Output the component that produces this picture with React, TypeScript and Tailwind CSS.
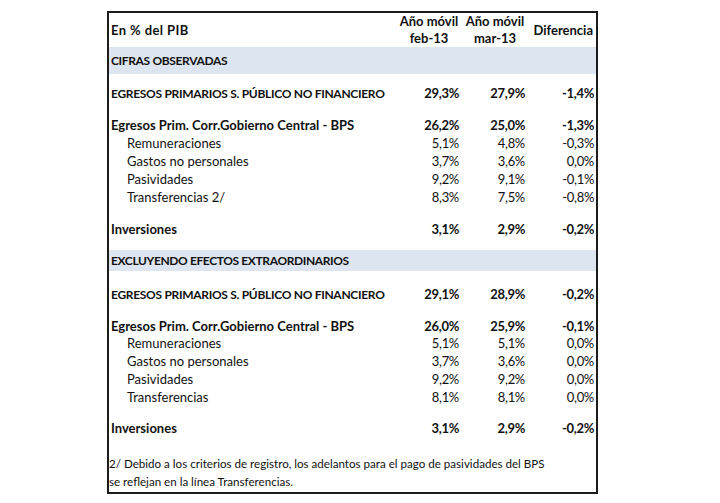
import React from 'react';

type Row = {
  label: string;
  values?: [string, string, string];
  bold?: boolean;
  caps?: boolean;
  indent?: boolean;
  h: string;
  top: string;
};

const rows: Row[] = [
  { label: 'EGRESOS PRIMARIOS S. PÚBLICO NO FINANCIERO', values: ['29,3%', '27,9%', '-1,4%'], bold: true, caps: true, h: 'h-[18px]', top: 'mt-[10px]' },
  { label: 'Egresos Prim. Corr.Gobierno Central - BPS', values: ['26,2%', '25,0%', '-1,3%'], bold: true, h: 'h-[18px]', top: 'mt-[14px]' },
  { label: 'Remuneraciones', values: ['5,1%', '4,8%', '-0,3%'], indent: true, h: 'h-[18px]', top: '' },
  { label: 'Gastos no personales', values: ['3,7%', '3,6%', '0,0%'], indent: true, h: 'h-[18px]', top: '' },
  { label: 'Pasividades', values: ['9,2%', '9,1%', '-0,1%'], indent: true, h: 'h-[18px]', top: '' },
  { label: 'Transferencias 2/', values: ['8,3%', '7,5%', '-0,8%'], indent: true, h: 'h-[18px]', top: '' },
  { label: 'Inversiones', values: ['3,1%', '2,9%', '-0,2%'], bold: true, h: 'h-[18px]', top: 'mt-[14px]' },
];

const rows2: Row[] = [
  { label: 'EGRESOS PRIMARIOS S. PÚBLICO NO FINANCIERO', values: ['29,1%', '28,9%', '-0,2%'], bold: true, caps: true, h: 'h-[18px]', top: 'mt-[14px]' },
  { label: 'Egresos Prim. Corr.Gobierno Central - BPS', values: ['26,0%', '25,9%', '-0,1%'], bold: true, h: 'h-[17px]', top: 'mt-[14px]' },
  { label: 'Remuneraciones', values: ['5,1%', '5,1%', '0,0%'], indent: true, h: 'h-[18px]', top: '' },
  { label: 'Gastos no personales', values: ['3,7%', '3,6%', '0,0%'], indent: true, h: 'h-[18px]', top: '' },
  { label: 'Pasividades', values: ['9,2%', '9,2%', '0,0%'], indent: true, h: 'h-[18px]', top: '' },
  { label: 'Transferencias', values: ['8,1%', '8,1%', '0,0%'], indent: true, h: 'h-[18px]', top: '' },
  { label: 'Inversiones', values: ['3,1%', '2,9%', '-0,2%'], bold: true, h: 'h-[18px]', top: 'mt-[13px]' },
];

function DataRow({ row }: { row: Row }) {
  return (
    <div className={`grid grid-cols-[minmax(0,1fr)_66px_66px_68px] items-center ${row.h} ${row.top} ${row.bold ? 'font-bold' : ''}`}>
      <div className={`${row.indent ? 'pl-[18px]' : 'pl-[2px]'} ${row.caps ? 'text-[12px] tracking-[-0.3px]' : ''} whitespace-nowrap`}>
        {row.label}
      </div>
      {row.values?.map((v, i) => (
        <div key={i} className={`text-right tracking-[-0.3px] ${i === 2 ? 'pr-[2px]' : 'pr-[3px]'}`}>
          {v}
        </div>
      ))}
    </div>
  );
}

export default function App() {
  return (
    <div className="w-[720px] h-[503px] bg-white overflow-hidden text-[#111] text-[13px] font-['Lato',sans-serif]">
      <div className="ml-[107px] mt-[11px] w-[491px] border-2 border-[#1c1c1c] flex flex-col">
        {/* encabezado */}
        <div className="grid grid-cols-[minmax(0,1fr)_66px_66px_68px] items-center h-[34px] font-bold leading-[17px]">
          <div className="pl-[2px] tracking-[0.4px]">En % del PIB</div>
          <div className="text-center">Año móvil<br />feb-13</div>
          <div className="text-center">Año móvil<br />mar-13</div>
          <div className="text-right pr-[3px]">Diferencia</div>
        </div>

        <div className="h-[27px] bg-[#dde5f0] font-bold flex items-center pl-[2px] text-[12px] tracking-[-0.35px]">
          CIFRAS OBSERVADAS
        </div>
        {rows.map((r, i) => (
          <DataRow key={i} row={r} />
        ))}

        <div className="mt-[12px] h-[21px] bg-[#dde5f0] font-bold flex items-center pl-[2px] text-[12px] tracking-[-0.38px]">
          EXCLUYENDO EFECTOS EXTRAORDINARIOS
        </div>
        {rows2.map((r, i) => (
          <DataRow key={i} row={r} />
        ))}

        <div className="mt-[18px] text-[11.6px] leading-[18px] pb-[1px]">
          <div>2/ Debido a los criterios de registro, los adelantos para el pago de pasividades del BPS</div>
          <div>se reflejan en la línea Transferencias.</div>
        </div>
      </div>
    </div>
  );
}
